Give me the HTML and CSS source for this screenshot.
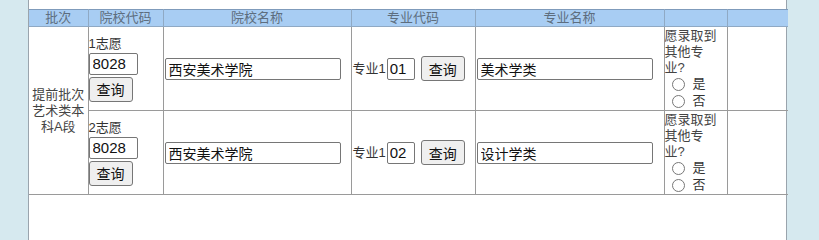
FILE: index.html
```html
<!DOCTYPE html>
<html lang="zh-CN">
<head>
<meta charset="utf-8">
<title>志愿填报</title>
<link rel="stylesheet" href="styles.css">
</head>
<body>
<div class="panel">
  <table class="grid">
    <colgroup>
      <col class="c1"><col class="c2"><col class="c3"><col class="c4"><col class="c5"><col class="c6"><col class="c7">
    </colgroup>
    <thead>
      <tr>
        <th>批次</th>
        <th>院校代码</th>
        <th>院校名称</th>
        <th>专业代码</th>
        <th>专业名称</th>
        <th></th>
        <th></th>
      </tr>
    </thead>
    <tbody>
      <tr class="row">
        <td class="batch" rowspan="2">提前批次艺术类本科A段</td>
        <td class="code">
          <div class="lbl">1志愿</div>
          <input class="inp inp-code" type="text" value="8028">
          <button class="btn btn-block" type="button">查询</button>
        </td>
        <td class="name"><input class="inp inp-name" type="text" value="西安美术学院"></td>
        <td class="major">
          <div class="major-line">
            <span>专业1</span>
            <input class="inp inp-major" type="text" value="01">
            <button class="btn" type="button">查询</button>
          </div>
        </td>
        <td class="name"><input class="inp inp-name" type="text" value="美术学类"></td>
        <td class="adj">
          <div class="q">愿录取到其他专业?</div>
          <label class="opt"><span class="radio"></span>是</label>
          <label class="opt"><span class="radio"></span>否</label>
        </td>
        <td></td>
      </tr>
      <tr class="row">
        <td class="code">
          <div class="lbl">2志愿</div>
          <input class="inp inp-code" type="text" value="8028">
          <button class="btn btn-block" type="button">查询</button>
        </td>
        <td class="name"><input class="inp inp-name" type="text" value="西安美术学院"></td>
        <td class="major">
          <div class="major-line">
            <span>专业1</span>
            <input class="inp inp-major" type="text" value="02">
            <button class="btn" type="button">查询</button>
          </div>
        </td>
        <td class="name"><input class="inp inp-name" type="text" value="设计学类"></td>
        <td class="adj">
          <div class="q">愿录取到其他专业?</div>
          <label class="opt"><span class="radio"></span>是</label>
          <label class="opt"><span class="radio"></span>否</label>
        </td>
        <td></td>
      </tr>
    </tbody>
  </table>
</div>
</body>
</html>
```
FILE: styles.css
```css
html, body {
  margin: 0;
  padding: 0;
}
html {
  background: #d6e9ef;
}
body {
  font-family: "Liberation Sans", "Noto Sans CJK SC", sans-serif;
  font-size: 13px;
  color: #333;
  min-height: 100vh;
}
.panel {
  margin-left: 28px;
  width: 759px;
  min-height: 100vh;
  box-sizing: border-box;
  padding-top: 9px;
  background: #fff;
  border-left: 1px solid #9aa4ad;
  border-right: 1px solid #9aa4ad;
}
.grid {
  border-collapse: collapse;
  table-layout: fixed;
  width: 759px;
}
.c1 { width: 59px; }
.c2 { width: 75px; }
.c3 { width: 188px; }
.c4 { width: 124px; }
.c5 { width: 189px; }
.c6 { width: 63px; }
.c7 { width: 61px; }

.grid th {
  background: #a8cdf3;
  color: #5d6d7e;
  font-weight: normal;
  height: 16px;
  line-height: 16px;
  padding: 0;
  border: 1px solid #8fa9c4;
  border-top-color: #7f9bbb;
}
.grid th:first-child { border-left: none; }
.grid th:last-child { border-right: none; }

.grid td {
  border: 1px solid #9a9a9a;
  padding: 0;
  vertical-align: middle;
  line-height: 16px;
}
.grid td:first-child { border-left: none; }
.grid td:last-child { border-right: none; }
.grid tbody tr:first-child td { border-top: none; }
.row { height: 84px; }

.batch {
  text-align: center;
  padding: 0 3px;
  color: #444;
}
.code {
  padding-left: 1px;
}
.lbl {
  line-height: 16px;
  margin-bottom: 1px;
}
.inp {
  font-family: "Liberation Sans", "Noto Sans CJK SC", sans-serif;
  font-size: 14px;
  color: #111;
  height: 22px;
  box-sizing: border-box;
  border: 1px solid #767676;
  border-radius: 2px;
  padding: 0 3px;
  margin: 0;
  background: #fff;
  vertical-align: middle;
}
.inp-code {
  display: block;
  width: 49px;
  font-size: 15px;
}
.inp-name {
  display: block;
  width: 176px;
  margin-left: 1px;
}
.inp-major {
  width: 28px;
  font-size: 15px;
  padding: 0 2px;
}
.btn {
  font-family: "Liberation Sans", "Noto Sans CJK SC", sans-serif;
  font-size: 14px;
  color: #111;
  height: 25px;
  width: 44px;
  box-sizing: border-box;
  padding: 0;
  border: 1px solid #767676;
  border-radius: 3px;
  background: #efefef;
  margin: 0;
  vertical-align: middle;
}
.btn-block {
  display: block;
  margin-top: 2px;
}
.major-line {
  display: flex;
  align-items: center;
  padding-left: 1px;
}
.major-line .inp-major {
  margin-left: 1px;
}
.major-line .btn {
  margin-left: 6px;
}
.q {
  width: 56px;
  line-height: 16px;
  color: #444;
}
.opt {
  display: flex;
  align-items: center;
  height: 17px;
  padding-left: 7px;
  color: #333;
}
.radio {
  width: 11px;
  height: 11px;
  border: 1px solid #777;
  border-radius: 50%;
  background: #fff;
  margin-right: 8px;
  flex: none;
}
```
